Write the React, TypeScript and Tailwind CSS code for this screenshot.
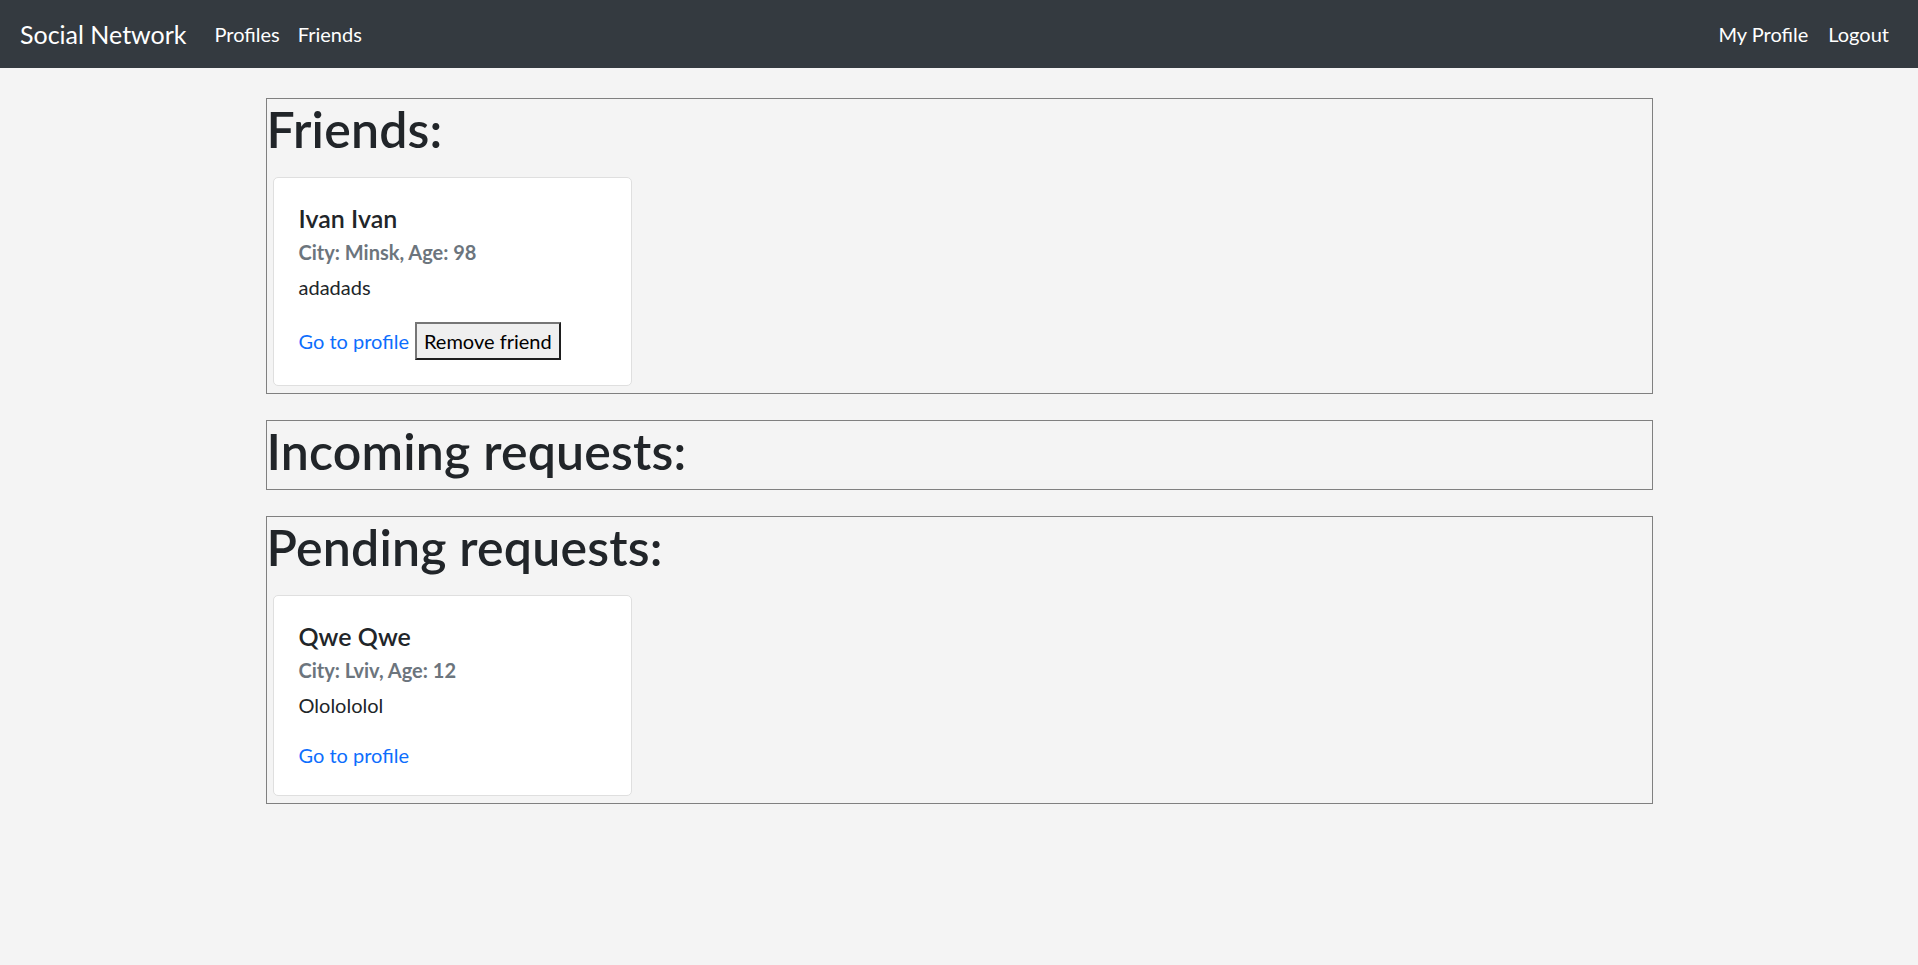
import React from 'react';

interface Person {
  name: string;
  city: string;
  age: number;
  about: string;
}

const friends: Person[] = [{ name: 'Ivan Ivan', city: 'Minsk', age: 98, about: 'adadads' }];
const incoming: Person[] = [];
const pending: Person[] = [{ name: 'Qwe Qwe', city: 'Lviv', age: 12, about: 'Ololololol' }];

function PersonCard({ person, canRemove }: { person: Person; canRemove?: boolean }) {
  return (
    <div className="mx-[6px] mt-[10px] mb-[7px] w-[359px] rounded-[5px] border border-[#dfdfdf] bg-white px-[25px] py-[25px]">
      <h5 className="text-[25px] leading-[30px] font-semibold text-[#212529]">{person.name}</h5>
      <h6 className="mt-[7px] text-[20px] leading-[24px] font-bold text-[#6c757d]">
        City: {person.city}, Age: {person.age}
      </h6>
      <p className="mt-[8px] text-[20px] leading-[30px] text-[#212529]">{person.about}</p>
      <div className="mt-[20px] flex items-center gap-[6px]">
        <a href="#" className="text-[20px] leading-[30px] text-[#0d6efd]">
          Go to profile
        </a>
        {canRemove && (
          <button className="h-[38px] border-2 border-t-[#767676] border-l-[#767676] border-r-[#1e1e1e] border-b-[#1e1e1e] bg-[#efefef] px-[7px] text-[20px] leading-[24px] text-black">
            Remove friend
          </button>
        )}
      </div>
    </div>
  );
}

function Section({ title, people, canRemove }: { title: string; people: Person[]; canRemove?: boolean }) {
  return (
    <section className="flex flex-col items-start border border-[#808080]">
      <h1 className="mb-2 text-[50px] leading-[60px] font-semibold tracking-[0.2px] text-[#212529]">{title}</h1>
      {people.map((p) => (
        <PersonCard key={p.name} person={p} canRemove={canRemove} />
      ))}
    </section>
  );
}

export default function App() {
  return (
    <div className="min-h-screen bg-[#f4f4f4] font-['Lato','Liberation_Sans',sans-serif]">
      <nav className="flex h-[68px] items-center bg-[#343a40] px-[20px] text-white">
        <a href="#" className="mr-[18px] text-[25px] leading-[30px]">
          Social Network
        </a>
        <div className="flex text-[20px]">
          <a href="#" className="px-[10px]">Profiles</a>
          <a href="#" className="pl-[8px] pr-[10px]">Friends</a>
        </div>
        <div className="ml-auto flex text-[20px]">
          <a href="#" className="px-[10px]">My Profile</a>
          <a href="#" className="pl-[10px] pr-[9px]">Logout</a>
        </div>
      </nav>

      <main className="mx-auto flex w-[1387px] flex-col gap-[26px] pt-[30px]">
        <Section title="Friends:" people={friends} canRemove />
        <Section title="Incoming requests:" people={incoming} />
        <Section title="Pending requests:" people={pending} />
      </main>
    </div>
  );
}
